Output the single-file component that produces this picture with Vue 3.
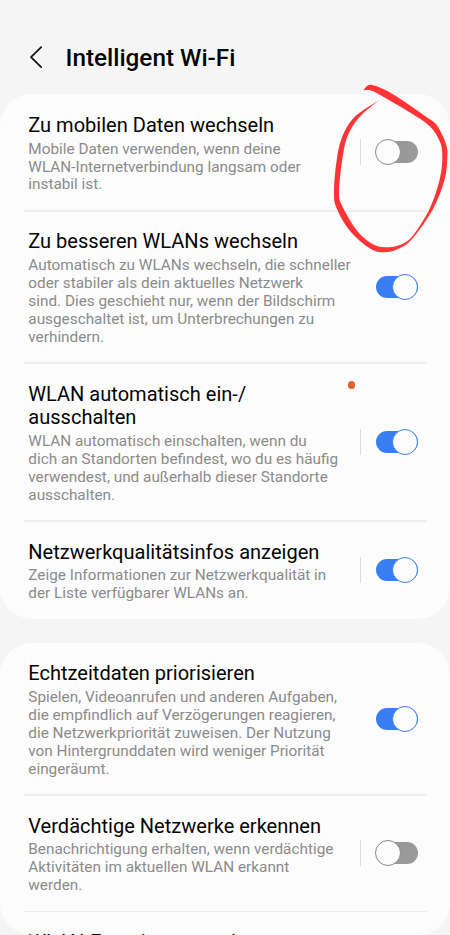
<script setup>
const groups = [
  [
    { title: ['Zu mobilen Daten wechseln'], desc: ['Mobile Daten verwenden, wenn deine', 'WLAN-Internetverbindung langsam oder', 'instabil ist.'], on: false, divider: true },
    { title: ['Zu besseren WLANs wechseln'], desc: ['Automatisch zu WLANs wechseln, die schneller', 'oder stabiler als dein aktuelles Netzwerk', 'sind. Dies geschieht nur, wenn der Bildschirm', 'ausgeschaltet ist, um Unterbrechungen zu', 'verhindern.'], on: true },
    { title: ['WLAN automatisch ein-/', 'ausschalten'], desc: ['WLAN automatisch einschalten, wenn du', 'dich an Standorten befindest, wo du es häufig', 'verwendest, und außerhalb dieser Standorte', 'ausschalten.'], on: true, divider: true, dot: true },
    { title: ['Netzwerkqualitätsinfos anzeigen'], desc: ['Zeige Informationen zur Netzwerkqualität in', 'der Liste verfügbarer WLANs an.'], on: true, divider: true }
  ],
  [
    { title: ['Echtzeitdaten priorisieren'], desc: ['Spielen, Videoanrufen und anderen Aufgaben,', 'die empfindlich auf Verzögerungen reagieren,', 'die Netzwerkpriorität zuweisen. Der Nutzung', 'von Hintergrunddaten wird weniger Priorität', 'eingeräumt.'], on: true },
    { title: ['Verdächtige Netzwerke erkennen'], desc: ['Benachrichtigung erhalten, wenn verdächtige', 'Aktivitäten im aktuellen WLAN erkannt', 'werden.'], on: false, divider: true },
    { title: ['WLAN-Energiesparmodus'], desc: [] }
  ]
]

// Smooth curve through a list of points (Catmull-Rom converted to Béziers)
function curve(p) {
  let d = ''
  for (let i = 0; i < p.length - 1; i++) {
    const a = p[i - 1] || p[i], b = p[i], c = p[i + 1], e = p[i + 2] || c
    d += `C${b[0] + (c[0] - a[0]) / 6} ${b[1] + (c[1] - a[1]) / 6} ${c[0] - (e[0] - b[0]) / 6} ${c[1] - (e[1] - b[1]) / 6} ${c[0]} ${c[1]}`
  }
  return d
}
const outer = [[363.5, 90.3], [368, 85.2], [375, 85.8], [393.5, 94.5], [426.5, 117], [437, 125.5], [446, 144], [447.3, 158], [444.5, 180], [433, 209], [412.5, 238.5], [398, 249], [384, 252.3], [370, 248.5], [350, 231], [336.5, 208], [334, 191.5], [336.5, 161.5], [341.7, 138.3], [354, 117.5], [379, 100.3]]
const inner = [[379, 100.3], [360, 116.5], [348, 135], [342.5, 158], [339, 191], [341.7, 205], [356.5, 230], [371.5, 243.5], [385, 247.3], [400, 245], [413, 235.5], [430, 208], [440, 178], [442.3, 156], [440, 142], [430, 126.5], [410, 112.5], [380, 95], [371, 90.5], [363.5, 90.3]]
const markPath = `M363.5 90.3${curve(outer)}${curve(inner)}Z`
</script>

<template>
  <main class="screen">
    <header class="header">
      <svg class="back" width="14" height="24" viewBox="0 0 14 24"><path d="M12.2 2.2 2 12.2l10.2 10" /></svg>
      <h1>Intelligent Wi-Fi</h1>
    </header>
    <section v-for="(group, g) in groups" :key="g" class="card">
      <div v-for="row in group" :key="row.title[0]" class="row">
        <div class="text">
          <h2><span v-for="line in row.title" :key="line">{{ line }}</span></h2>
          <p><span v-for="line in row.desc" :key="line">{{ line }}</span></p>
        </div>
        <i v-if="row.dot" class="dot"></i>
        <div v-if="row.on !== undefined" class="control" :class="{ divided: row.divider }">
          <span class="switch" :class="{ on: row.on }"><span class="knob"></span></span>
        </div>
      </div>
    </section>
    <div class="corners"></div>
    <svg class="mark" width="450" height="935" viewBox="0 0 450 935"><path :d="markPath" /></svg>
  </main>
</template>

<style>
body { margin: 0; background: #f5f5f5; overflow: hidden; }
</style>

<style scoped>
.screen { position: relative; width: 450px; height: 935px; overflow: hidden; background: #f5f5f5; font-family: Roboto, sans-serif; color: #050505; }
.header { box-sizing: border-box; height: 94.3px; padding: 21px 0 0 29px; display: flex; align-items: center; gap: 22.5px; }
.back { flex: none; margin-bottom: 2px; fill: none; stroke: #111; stroke-width: 1.7; stroke-linecap: round; stroke-linejoin: round; }
h1 { margin: 0; font-size: 24.3px; line-height: 28px; font-weight: 500; white-space: nowrap; }
.card { background: #fcfcfc; border-radius: 32px; margin-bottom: 23.3px; }
.row { position: relative; display: flex; align-items: center; justify-content: space-between; padding: 19.6px 32px 16.3px 28.3px; }
.row + .row::before { content: ''; position: absolute; top: -0.7px; left: 24px; right: 23.5px; height: 1.5px; background: #eee; }
.text span { display: block; white-space: nowrap; }
h2 { margin: 0 0 3.2px; font-size: 20.05px; line-height: 23.5px; font-weight: 400; }
p { margin: 0; font-size: 15.34px; line-height: 17.95px; color: #8b8b8b; }
.control { display: flex; align-items: center; height: 26px; padding-left: 14px; margin-bottom: 3.6px; }
.divided { border-left: 1px solid #dcdcdc; }
.switch { position: relative; width: 43px; height: 26px; display: flex; align-items: center; justify-content: flex-start; }
.switch::before { content: ''; position: absolute; top: 2px; right: 0; width: 42px; height: 22px; border-radius: 11px; background: #999; }
.knob { position: relative; box-sizing: border-box; width: 26px; height: 26px; border-radius: 50%; border: 1px solid #888; background: #fcfcfc; }
.on { justify-content: flex-end; }
.on::before { background: #397ef3; }
.on .knob { border-color: #397ef3; }
.dot { position: absolute; left: 347.5px; top: 18.3px; width: 7.4px; height: 7.4px; border-radius: 50%; background: #df652f; }
.corners { position: absolute; left: 0; bottom: 0; width: 450px; height: 40px; border-radius: 0 0 32px 32px; box-shadow: 0 0 0 40px #f5f5f5; clip-path: inset(8px 0 0 0); }
.mark { position: absolute; left: 0; top: 0; pointer-events: none; fill: #ff3535; }
</style>
